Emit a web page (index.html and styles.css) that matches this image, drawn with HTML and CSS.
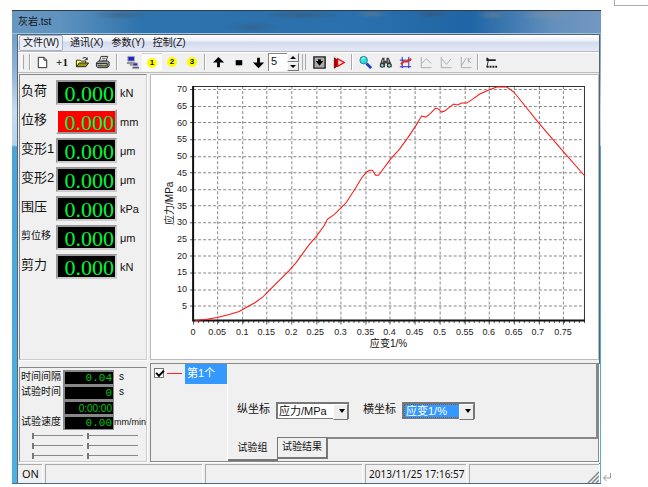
FILE: index.html
```html
<!DOCTYPE html>
<html lang="zh-CN">
<head>
<meta charset="utf-8">
<title>灰岩.tst</title>
<link rel="stylesheet" href="styles.css">
</head>
<body>
<i class="corner-mark"></i>
<div class="page">
<main class="window">
  <header class="titlebar"><h1>灰岩.tst</h1></header>
  <div class="client">
    <nav class="menubar">
      <button class="menu active">文件(W)</button>
      <button class="menu">通讯(X)</button>
      <button class="menu">参数(Y)</button>
      <button class="menu">控制(Z)</button>
    </nav>

    <div class="toolbar">
      <i class="grip"></i><i class="sep"></i>
      <button class="tool" aria-label="新建"><svg viewBox="0 0 16 16"><path d="M3.500 2.500h6l3 3v8h-9z" fill="#fff" stroke="#222"/><path d="M9.500 2.500v3h3" fill="none" stroke="#222"/></svg></button>
      <button class="tool plus" aria-label="加一">+1</button>
      <button class="tool" aria-label="打开"><svg viewBox="0 0 16 16"><path d="M1.500 12.500v-7h4l1 1h5v2" fill="#ffff66" stroke="#222"/><path d="M1.500 12.500l3-4h10l-3 4z" fill="#9a9a10" stroke="#222"/><path d="M8 3.500q3-2.500 5 1m0-2v2.500h-2.500" fill="none" stroke="#222"/></svg></button>
      <button class="tool" aria-label="打印"><svg viewBox="0 0 16 16"><path d="M4.500 7l2-5.500h7l-2 5.500" fill="#fff" stroke="#222"/><path d="M7.500 3.500h4M7 5.500h4" stroke="#555"/><path d="M1.500 8.500l2-2h10l1.500 1v4l-2 2h-10l-1.500-1.500z" fill="#aaa" stroke="#222"/><path d="M1.500 9h11.500M3 11.500h9M13 9v4" stroke="#222"/><path d="M8 10.300h3" stroke="#dd0"/></svg></button>
      <i class="sep"></i>
      <button class="tool" aria-label="联机"><svg viewBox="0 0 16 16"><path d="M3 1.500h7v5h-7z" fill="#22c" stroke="#aaa"/><path d="M2 8.500h9M5 10.500h7" stroke="#777" stroke-width="1.500"/><path d="M8.500 8.500h5v3h-5z" fill="#22c" stroke="#aaa"/><path d="M8 13.500h7" stroke="#666" stroke-width="2"/></svg></button>
      <button class="tool checked"><b class="ball">1</b></button>
      <button class="tool"><b class="ball">2</b></button>
      <button class="tool"><b class="ball">3</b></button>
      <i class="sep"></i>
      <button class="tool" aria-label="上升"><svg viewBox="0 0 16 16"><path d="M8 2l6 6h-4.500v5h-3v-5h-4.500z"/></svg></button>
      <button class="tool" aria-label="停止"><svg viewBox="0 0 16 16"><path d="M5 5.500h7v5.500h-7z"/></svg></button>
      <button class="tool" aria-label="下降"><svg viewBox="0 0 16 16"><path d="M8 14l6-6h-4.500v-5h-3v5h-4.500z"/></svg></button>
      <span class="spin">
        <input type="text" value="5" aria-label="速度档">
        <span class="spin-buttons">
          <button aria-label="增加"><svg viewBox="0 0 8 5"><path d="M1 4l3-3 3 3z"/></svg></button>
          <button aria-label="减少"><svg viewBox="0 0 8 5"><path d="M1 1l3 3 3-3z"/></svg></button>
        </span>
      </span>
      <i class="sep double"></i>
      <button class="tool" aria-label="归位"><svg viewBox="0 0 16 16"><path d="M2 2h12v12h-12z" fill="#aaa" stroke="#222" stroke-width="1.500"/><path d="M6.500 4.500h3v2h2.500l-4 5-4-5h2.500z"/></svg></button>
      <button class="tool" aria-label="开始试验"><svg viewBox="0 0 16 16"><path d="M2.500 3l4 3v5l-4 3z" fill="#a00" stroke="#800"/><path d="M6 4l7 4-7 4z" fill="#fdd" stroke="#d11" stroke-width="1.500"/></svg></button>
      <i class="sep"></i>
      <button class="tool" aria-label="缩放"><svg viewBox="0 0 16 16"><path d="M9 9l5 5" stroke="#1a3cc8" stroke-width="3"/><circle cx="6" cy="5.500" r="4" fill="#2fe0e0" stroke="#257b88"/><path d="M4 5q1-2 3-2" fill="none" stroke="#fff"/></svg></button>
      <button class="tool" aria-label="查找"><svg viewBox="0 0 16 16"><path d="M4.500 3h2.500v3h2v-3h2.500l3 7v3h-5v-4h-2v4h-5.500v-3z" fill="#444"/><circle cx="4.500" cy="11" r="2" fill="#8cc" stroke="#222"/><circle cx="12" cy="11" r="2" fill="#8cc" stroke="#222"/><path d="M5 5v3M11 5v3" stroke="#bbb"/></svg></button>
      <button class="tool" aria-label="曲线"><svg viewBox="0 0 16 16"><path d="M4.500 2v12M11.500 2v12M2 12.500h12M2 5.500h12" stroke="#1720d0" fill="none"/><path d="M3 10l3-3h4l4-3" stroke="#e21" stroke-width="2" fill="none"/></svg></button>
      <button class="tool off" aria-label="峰值" disabled><svg viewBox="0 0 16 16"><path d="M3.500 2v11.500h11M4 9l5-5 5 5"/></svg></button>
      <button class="tool off" aria-label="谷值" disabled><svg viewBox="0 0 16 16"><path d="M3.500 2v11.500h11M4 4l5 6 5-6"/></svg></button>
      <button class="tool off" aria-label="斜率" disabled><svg viewBox="0 0 16 16"><path d="M3.500 2v11.500h11M4 11l5-8M11 3v5m3-5l-3 2.500 3 3"/></svg></button>
      <i class="sep"></i>
      <button class="tool" aria-label="标尺"><svg viewBox="0 0 16 16"><path d="M3 13l2-9" stroke="#222" fill="none"/><path d="M3.500 3v2.500h9" stroke="#222" stroke-width="2" fill="none"/><path d="M3 12.500h11" stroke="#222" stroke-width="2" stroke-dasharray="2 1"/></svg></button>
    </div>

    <div class="workspace">
      <section class="panel readings">
        <div class="reading"><label for="load">负荷</label><output id="load">0.000</output><span>kN</span></div>
        <div class="reading alarm"><label for="disp">位移</label><output id="disp">0.000</output><span>mm</span></div>
        <div class="reading"><label for="def1">变形1</label><output id="def1">0.000</output><span>μm</span></div>
        <div class="reading"><label for="def2">变形2</label><output id="def2">0.000</output><span>μm</span></div>
        <div class="reading"><label for="conf">围压</label><output id="conf">0.000</output><span>kPa</span></div>
        <div class="reading"><label class="small" for="sdisp">剪位移</label><output id="sdisp">0.000</output><span>μm</span></div>
        <div class="reading"><label for="shear">剪力</label><output id="shear">0.000</output><span>kN</span></div>
      </section>

      <section class="chart">
        <svg viewBox="152 75 446 283" role="img" aria-label="应力-应变曲线">
          <path class="grid" d="M194 89.500h391M194 106.500h391M194 122.500h391M194 139.500h391M194 156.500h391M194 172.500h391M194 189.500h391M194 205.500h391M194 222.500h391M194 239.500h391M194 255.500h391M194 272.500h391M194 289.500h391M194 305.500h391"/>
          <path class="grid" d="M218.500 86v234M243.500 86v234M267.500 86v234M292.500 86v234M317.500 86v234M341.500 86v234M366.500 86v234M390.500 86v234M415.500 86v234M440.500 86v234M465.500 86v234M489.500 86v234M514.500 86v234M539.500 86v234M563.500 86v234"/>
          <path class="tick" d="M191 89.500h3M191 106.500h3M191 122.500h3M191 139.500h3M191 156.500h3M191 172.500h3M191 189.500h3M191 205.500h3M191 222.500h3M191 239.500h3M191 255.500h3M191 272.500h3M191 289.500h3M191 305.500h3"/>
          <path class="tick minor" d="M194 321.500h391"/>
          <path class="tick" d="M194.500 320v4M218.500 320v4M243.500 320v4M267.500 320v4M292.500 320v4M317.500 320v4M341.500 320v4M366.500 320v4M390.500 320v4M415.500 320v4M440.500 320v4M465.500 320v4M489.500 320v4M514.500 320v4M539.500 320v4M563.500 320v4"/>
          <path class="frame" d="M194 86.500h390.500v234"/>
          <path class="axis" d="M194 86v234h391"/>
          <polyline class="curve" points="196,320 206,319 218,317 230,314 240,311 247,307 256,302 263,297 269,291 280,280 290,270 297,262 302,255 310,244 317,236 325,225 328,219 335,214 342,207 347,202 356,188 362,178 367,172 370,170 373,170 376,175 379,175 391,159 400,149 408,138 416,126 419,121 422,116 426,117 430,114 436,108 439,109 442,112 445,111 450,107 454,104 458,105 462,103 467,103 473,99 480,94 489,90 497,87 507,87 514,92 539,123 563,151 585,176"/>
          <g class="num end">
            <text x="188" y="92">70</text><text x="188" y="109">65</text><text x="188" y="126">60</text><text x="188" y="142">55</text><text x="188" y="159">50</text><text x="188" y="176">45</text><text x="188" y="192">40</text><text x="188" y="209">35</text><text x="188" y="225">30</text><text x="188" y="242">25</text><text x="188" y="259">20</text><text x="188" y="275">15</text><text x="188" y="292">10</text><text x="188" y="308">5</text>
          </g>
          <g class="num mid">
            <text x="194" y="334">0</text><text x="218" y="334">0.05</text><text x="243" y="334">0.1</text><text x="267" y="334">0.15</text><text x="292" y="334">0.2</text><text x="316" y="334">0.25</text><text x="341" y="334">0.3</text><text x="366" y="334">0.35</text><text x="390" y="334">0.4</text><text x="415" y="334">0.45</text><text x="440" y="334">0.5</text><text x="465" y="334">0.55</text><text x="489" y="334">0.6</text><text x="514" y="334">0.65</text><text x="538" y="334">0.7</text><text x="563" y="334">0.75</text>
          </g>
          <text class="title" x="389" y="346">应变1/%</text>
          <text class="title" transform="translate(174 203) rotate(-90)">应力/MPa</text>
        </svg>
      </section>

      <section class="panel timing">
        <div class="time-row"><label for="step">时间间隔</label><output id="step">0.04</output><span>s</span></div>
        <div class="time-row"><label for="time">试验时间</label><output id="time">0</output><span>s</span></div>
        <div class="time-row"><i></i><output class="clock" aria-label="计时">0:00:00</output></div>
        <div class="time-row"><label for="speed">试验速度</label><output id="speed">0.00</output><span class="rate">mm/min</span></div>
        <div class="sliders">
          <input type="range" value="0" aria-label="粗调1"><input type="range" value="0" aria-label="细调1">
          <input type="range" value="0" aria-label="粗调2"><input type="range" value="0" aria-label="细调2">
          <input type="range" value="0" aria-label="粗调3"><input type="range" value="0" aria-label="细调3">
        </div>
      </section>

      <section class="panel lower">
        <div class="series">
          <input id="s1" type="checkbox" checked><i class="swatch"></i><label for="s1">第1个</label>
        </div>
        <div class="tabs">
          <div class="tab-body">
            <label for="yaxis">纵坐标</label>
            <span class="combo"><select id="yaxis"><option>应力/MPa</option></select></span>
            <label class="second" for="xaxis">横坐标</label>
            <span class="combo focused"><select id="xaxis"><option>应变1/%</option></select></span>
          </div>
          <div class="tab-strip">
            <button class="tab current">试验组</button>
            <button class="tab">试验结果</button>
            <i class="rest"></i>
          </div>
        </div>
      </section>
    </div>

    <footer class="statusbar">
      <span class="on">ON</span><span></span><span></span><span class="date">2013/11/25 17:16:57</span><span class="last"><svg viewBox="0 0 12 12"><path d="M1 12l11-11M5 12l7-7M9 12l3-3" stroke="#888" stroke-width="1.500"/></svg></span>
    </footer>
  </div>
</main>
<svg class="return" viewBox="0 0 10 10"><path d="M8.500 1v5h-7M4.500 3l-3 3 3 3" fill="none" stroke="#999"/></svg>
</div>
</body>
</html>
```
FILE: styles.css
```css
* { box-sizing: border-box; }

body {
  margin: 0;
  background: #fff;
  color: #111;
  font: 10px/14px "Liberation Sans", "Noto Sans CJK SC", sans-serif;
}

button, input, select { margin: 0; padding: 0; font: inherit; color: inherit; }
i, svg { display: block; }

.corner-mark {
  position: absolute;
  top: 0;
  right: 0;
  width: 34px;
  height: 6px;
  border: solid #aaa;
  border-width: 0 0 1px 1px;
}

.page {
  display: flex;
  align-items: flex-end;
  padding: 10px 36px 0 12px;
}

.window {
  flex: 1;
  min-width: 0;
  padding: 0 1px 0 5px;
  border-top: 1px solid #333a42;
  border-bottom: 1px solid #456a86;
  background: linear-gradient(#5f94c2 0, #8fb4d6 60px, #c4dcee 100px, #b4d4ec 134px, #4ba3d8 136px, #4fb0e2 100%);
}

.return { width: 10px; height: 10px; margin: 0 0 2px 1px; }

/* Title bar with the blurred desktop behind it */
.titlebar {
  height: 23px;
  margin: 0 -1px 0 -5px;
  padding: 4px 6px;
  background:
    radial-gradient(ellipse 30px 5px at 110px 4px, #3f5f7c99, transparent),
    radial-gradient(ellipse 42px 5px at 290px 4px, #39577499, transparent),
    radial-gradient(ellipse 28px 6px at 240px 16px, #39577477, transparent),
    radial-gradient(ellipse 16px 4px at 360px 3px, #7a808477, transparent),
    radial-gradient(ellipse 18px 5px at 420px 3px, #39577499, transparent),
    radial-gradient(ellipse 16px 5px at 480px 4px, #6f7f8f99, transparent),
    radial-gradient(ellipse 28px 5px at 535px 4px, #848f9c99, transparent),
    linear-gradient(90deg, #6898c0 0, #5f93c0 8%, #2e73ad 22%, #2a70ae 60%, #1f65a5 78%, #6490bd 92%, #7298c0);
  border-bottom: 1px solid #9cc4e4;
}

.titlebar h1 { margin: 0; font-size: 10px; font-weight: 400; line-height: 14px; }

.client {
  background: #f0f0f0;
  border: 1px solid #56646f;
  border-width: 1px 1px 0 1px;
}

.menubar {
  display: flex;
  height: 16px;
  padding: 0 1px;
  background: linear-gradient(#fff, #eef1fa 35%, #d4dbee 45%, #e2e8f6);
}

.menu {
  padding: 0 3px;
  border: 1px solid transparent;
  border-radius: 2px;
  background: none;
  line-height: 12px;
}

.menu.active { margin-right: 3px; border-color: #a9b2c4; background: #e9edf7; }

.toolbar {
  display: flex;
  align-items: center;
  height: 22px;
  padding-left: 3px;
  border-top: 1px solid #bbb;
  border-bottom: 1px solid #bbb;
  box-shadow: inset 0 1px #fff;
}

.grip { width: 3px; height: 16px; border: 1px solid #fff; border-right-color: #aaa; }
.sep { width: 2px; height: 16px; margin: 0 2px; border-left: 1px solid #aaa; border-right: 1px solid #fff; }
.grip + .sep { margin: 0 1px 0 5px; }
.sep.double { width: 4px; margin: 0 3px; border-right: 1px solid #aaa; }

.tool {
  display: grid;
  place-items: center;
  width: 20px;
  height: 18px;
  border: 0;
  background: none;
}

.plus ~ .sep:nth-of-type(3) { margin: 0 4px; }
.tool svg { width: 15px; height: 15px; }
.plus { font: bold 11px/14px "Liberation Serif", serif; }
.checked { background: #fafafa; border-top: 1px solid #ccc; }
.ball { width: 10px; height: 10px; border-radius: 5px; background: #ff0; font-size: 8px; line-height: 10px; }
.off path { fill: none; stroke: #aaa; }

.spin { display: flex; height: 18px; }
.spin input { width: 19px; border: 1px solid #888; border-width: 1px 0 0 1px; padding: 0 0 3px 2px; background: #fff; font-size: 11px; }
.spin-buttons { display: grid; width: 12px; }
.spin button { display: grid; place-items: center; border: 1px solid #fff; border-right-color: #777; border-bottom-color: #777; background: #eee; }
.spin svg { width: 8px; height: 5px; }

.workspace {
  display: grid;
  grid-template-columns: 128px minmax(0, 1fr);
  column-gap: 3px;
  row-gap: 3px;
  padding: 1px 0 0 1px;
}

.panel { border: 1px solid #888; border-right-color: #ccc; border-bottom-color: #ccc; box-shadow: 1px 1px #fff; }

.readings { padding: 3px 0 0 1px; }

.reading {
  display: grid;
  grid-template-columns: 34px 61px 1fr;
  column-gap: 1px;
  align-items: center;
  height: 29px;
  white-space: nowrap;
}

.reading label { padding-bottom: 3px; font-size: 13px; line-height: 20px; }
.reading label.small { font-size: 10px; }
.reading span { font-size: 11px; padding-left: 2px; }

.reading output {
  height: 25px;
  padding-right: 1px;
  border: 2px solid #999;
  border-right-color: #ccc;
  border-bottom-color: #ccc;
  background: #000;
  color: #00f43c;
  font: 22px/23px "Liberation Serif", serif;
  text-align: right;
}

.alarm output { border-color: #f4f4f4 #999 #999 #f4f4f4; background: #f00; }

.chart { border: 1px solid #bbb; background: #fff; }
.chart svg { width: 100%; height: auto; }
.grid { fill: none; stroke: #888; stroke-dasharray: 3 2; }
.tick { stroke: #555; }
.minor { stroke-width: 2px; stroke-dasharray: 1 4; }
.frame { fill: none; stroke: #333; }
.axis { fill: none; stroke: #111; stroke-width: 2px; }
.curve { fill: none; stroke: #f11; }
.num { font-size: 9px; fill: #222; }
.end { text-anchor: end; }
.mid, .title { text-anchor: middle; }
.title { font-size: 10px; fill: #111; }

.timing { margin-top: 4px; padding: 2px 0 0 1px; }

.time-row {
  display: grid;
  grid-template-columns: 42px 51px 1fr;
  align-items: center;
  height: 15px;
  white-space: nowrap;
}

.time-row output {
  height: 15px;
  padding-right: 1px;
  border: 1px solid #888;
  border-width: 2px 1px 1px 2px;
  background: #000;
  color: #00c416;
  font: 11px/13px "Liberation Mono", monospace;
  text-align: right;
}

.time-row .clock { font: 10px/13px "Liberation Sans", sans-serif; }
.time-row span { padding-left: 5px; }
.time-row .rate { padding-left: 0; font-size: 9px; }

.sliders { display: grid; grid-template-columns: 1fr 1fr; column-gap: 4px; padding: 1px 8px 0 11px; }

.sliders input { appearance: none; width: 100%; height: 10px; background: linear-gradient(#888, #888) center / 100% 1px no-repeat; }
.sliders input::-webkit-slider-thumb { appearance: none; width: 2px; height: 6px; background: #777; }

.lower { display: grid; grid-template-columns: 77px minmax(0, 1fr); border-color: #888; }

.series { display: flex; align-items: flex-start; padding-left: 3px; border-right: 1px solid #fff; }
.series input { appearance: none; width: 10px; height: 10px; margin-top: 4px; border: 1px solid #777; background: #fff; }
.series input:checked::before { content: ""; display: block; width: 6px; height: 3px; margin: 1px; border: solid #000; border-width: 0 0 2px 2px; transform: rotate(-45deg); }
.swatch { width: 15px; height: 1px; margin: 9px 3px 0 3px; background: #f22; }
.series label { flex: 1; height: 20px; padding-left: 2px; background: #39f; color: #fff; font-size: 11px; line-height: 19px; }

.tabs { display: flex; flex-direction: column; }

.tab-body {
  display: flex;
  flex: 1;
  align-items: flex-end;
  height: 76px;
  padding: 0 0 18px 9px;
  border-right: 2px solid #888;
  font-size: 11px;
}

.tab-body label { width: 39px; padding-bottom: 3px; white-space: nowrap; }
.tab-body .second { margin-left: 14px; }

.combo { position: relative; width: 73px; height: 17px; border: 1px solid #777; border-width: 2px 1px 1px 2px; background: #fff; }
.combo select { display: block; appearance: none; width: 100%; height: 14px; padding: 0 13px 0 1px; border: 0; outline: 0; background: none; line-height: 14px; }
.combo::before { content: ""; position: absolute; top: 0; right: 0; width: 13px; height: 14px; background: #eee; border: 1px solid #fff; border-right-color: #777; border-bottom-color: #777; }
.combo::after { content: ""; position: absolute; top: 5px; right: 3px; border: solid transparent; border-width: 4px 3px 0; border-top-color: #000; }
.focused { background: #39f; }
.combo.focused select { color: #fff; border: 1px dotted #865c2c; line-height: 12px; }

.tab-strip { display: flex; height: 24px; }
.tab { height: 22px; padding: 0 4px; border: solid #777; border-width: 1px 2px 2px 0; background: none; font-size: 10px; white-space: nowrap; }
.tab.current { width: 50px; height: 24px; border-width: 0 1px 2px 0; }
.rest { flex: 1; border-top: 2px solid #888; }

.statusbar {
  display: grid;
  grid-template-columns: 24px 157px 157px 101px minmax(0, 1fr);
  column-gap: 3px;
  margin-top: 2px;
  font: 10px/18px "Noto Sans", sans-serif;
}

.statusbar span { height: 19px; padding-left: 3px; border: solid #aaa; border-width: 1px 0 0 1px; box-shadow: 1px 0 #fff; white-space: nowrap; }
.statusbar .on { padding-left: 4px; font-size: 11px; border-left: 0; }
.statusbar .last { display: flex; align-items: flex-end; justify-content: flex-end; }
.last svg { width: 12px; height: 12px; }
```
